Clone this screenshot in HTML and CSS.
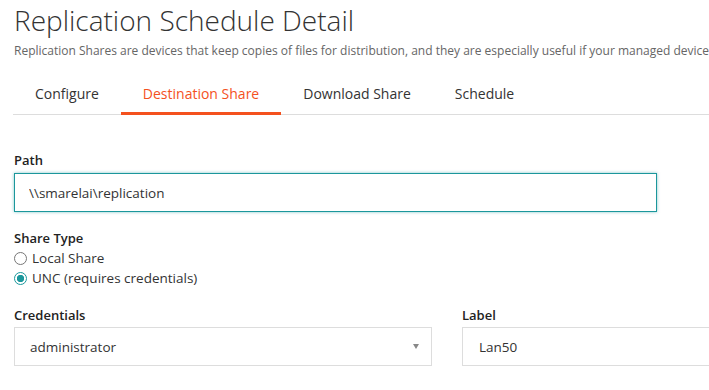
FILE: index.html
```html
<!DOCTYPE html>
<html lang="en">
<head>
<meta charset="utf-8">
<title>Replication Schedule Detail</title>
<link rel="stylesheet" href="styles.css">
</head>
<body>
<div class="page">
  <h1 class="title">Replication Schedule Detail</h1>
  <p class="subtitle">Replication Shares are devices that keep copies of files for distribution, and they are especially useful if your managed devices are deployed across multiple locations.</p>
  <nav class="tabs">
    <a class="tab">Configure</a>
    <a class="tab active">Destination Share</a>
    <a class="tab">Download Share</a>
    <a class="tab">Schedule</a>
  </nav>
  <form class="form">
    <div class="field">
      <label class="label label-path">Path</label>
      <input class="input input-path focused" type="text" value="\\smarelai\replication">
    </div>
    <div class="field field-radios">
      <span class="label label-flat">Share Type</span>
      <label class="radio"><input type="radio" name="st"><span>Local Share</span></label>
      <label class="radio"><input type="radio" name="st" checked><span>UNC (requires credentials)</span></label>
    </div>
    <div class="row">
      <div class="field col">
        <label class="label label-tight">Credentials</label>
        <div class="select">
          <span>administrator</span>
          <span class="caret"></span>
        </div>
      </div>
      <div class="field col">
        <label class="label label-tight">Label</label>
        <input class="input input-label" type="text" value="Lan50">
      </div>
    </div>
  </form>
</div>
</body>
</html>
```

FILE: styles.css
```css
html, body {
  margin: 0;
  padding: 0;
  overflow: hidden;
  background: #fff;
}
body {
  font-family: "Open Sans", "Noto Sans", sans-serif;
  color: #333;
}
.page {
  width: 866px;
  padding: 0 14px;
}
.title {
  font-size: 28px;
  font-weight: 300;
  line-height: 34px;
  margin: 3px 0 0;
  color: #333;
}
.subtitle {
  font-size: 12px;
  line-height: 16px;
  margin: 6px 0 0;
  color: #666;
  white-space: nowrap;
}
.tabs {
  display: flex;
  margin: 16px 0 0 -1px;
  border-bottom: 1px solid #ddd;
}
.tab {
  font-size: 14px;
  line-height: 20px;
  padding: 9px 22px 10px;
  color: #333;
  cursor: pointer;
}
.tab.active {
  color: #f4511e;
  border-bottom: 3px solid #f4511e;
  margin-bottom: -1px;
  padding-bottom: 8px;
}
.form {
  margin-top: 35px;
}
.field {
  display: flex;
  flex-direction: column;
}
.label {
  font-size: 13px;
  font-weight: 600;
  line-height: 20px;
  color: #222;
}
.label-path {
  margin-bottom: 3px;
}
.label-flat {
  margin-bottom: 0;
}
.label-tight {
  margin-bottom: 2px;
}
.input {
  box-sizing: border-box;
  height: 39px;
  border: 1px solid #ddd;
  padding: 0 14px;
  font-family: inherit;
  font-size: 13.5px;
  color: #333;
  outline: none;
  background: #fff;
}
.input-path {
  width: 643px;
}
.focused {
  border-color: #1b979c;
  box-shadow: 0 0 3px rgba(27, 151, 156, 0.55);
}
.field-radios {
  margin-top: 16px;
}
.radio {
  display: flex;
  align-items: center;
  font-size: 13.5px;
  line-height: 20px;
  color: #333;
  gap: 5px;
}
.radio input {
  appearance: none;
  -webkit-appearance: none;
  margin: 0;
  width: 13px;
  height: 13px;
  border: 1px solid #777;
  border-radius: 50%;
  box-sizing: border-box;
  background: #fff;
}
.radio input:checked {
  border-color: #1b979c;
  background: radial-gradient(circle, #1b979c 0 3.4px, #fff 4px);
}
.row {
  display: flex;
  gap: 30px;
  margin-top: 17px;
}
.col {
  width: 418px;
}
.select {
  box-sizing: border-box;
  height: 39px;
  border: 1px solid #ddd;
  padding: 0 12px 0 15px;
  display: flex;
  align-items: center;
  justify-content: space-between;
  font-size: 13.5px;
  color: #333;
}
.caret {
  width: 0;
  height: 0;
  border-left: 3px solid transparent;
  border-right: 3px solid transparent;
  border-top: 5px solid #888;
}
.input-label {
  width: 100%;
  padding-left: 16px;
}
```
